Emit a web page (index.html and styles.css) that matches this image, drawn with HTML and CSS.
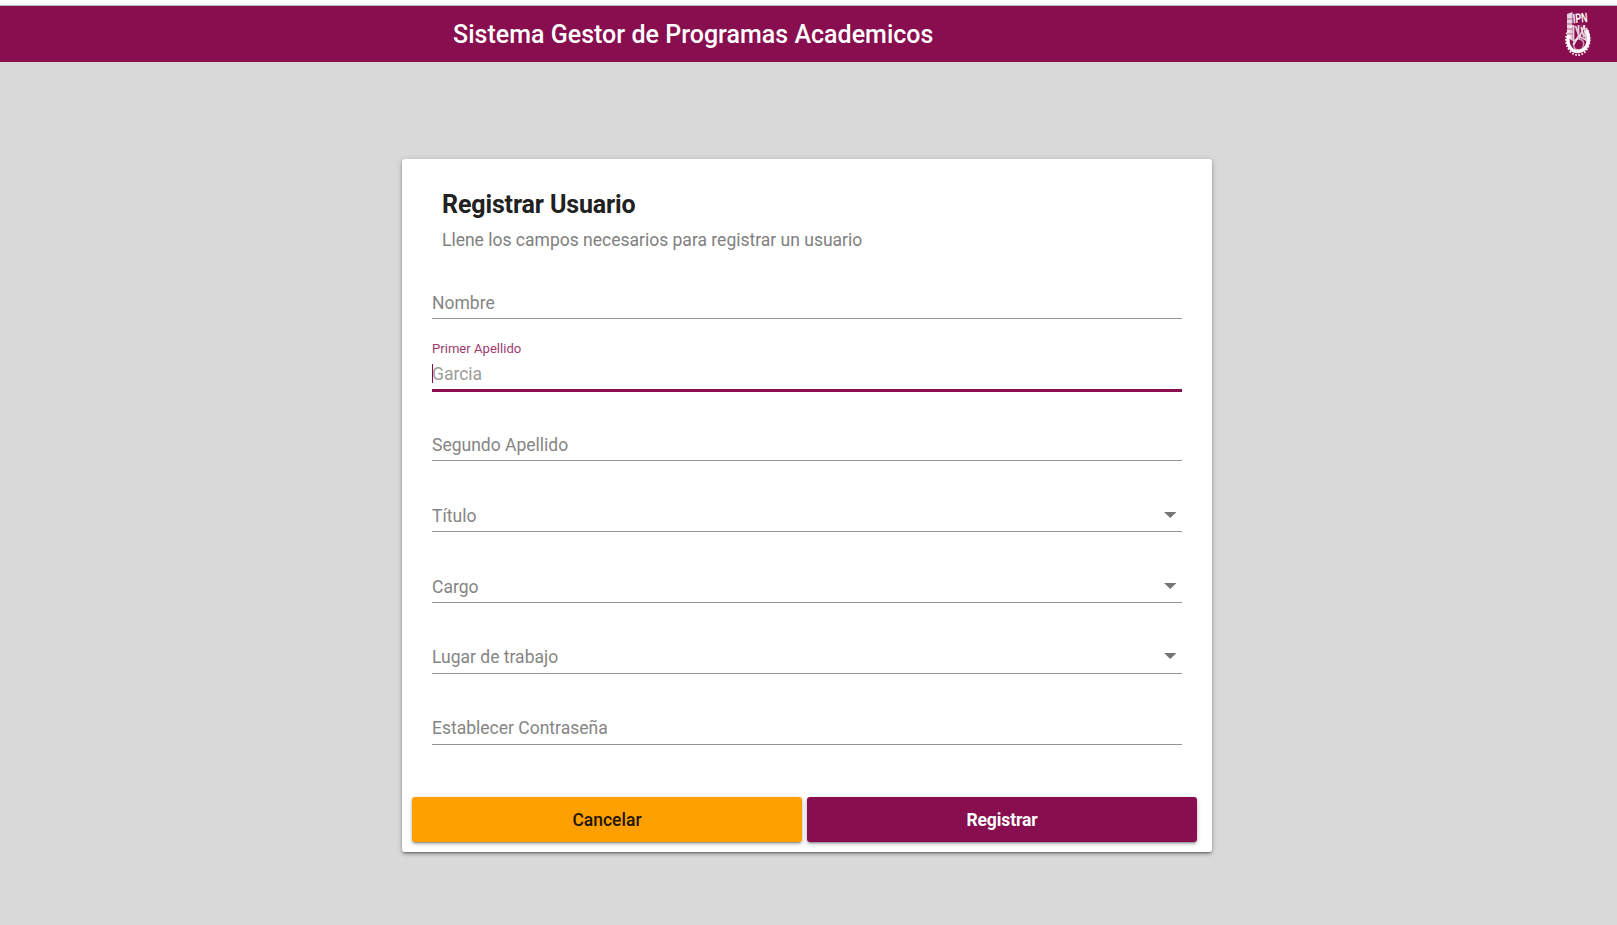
FILE: index.html
```html
<!DOCTYPE html>
<html lang="es">
<head>
<meta charset="utf-8">
<title>Sistema Gestor de Programas Academicos</title>
<link rel="stylesheet" href="styles.css">
</head>
<body>
<header class="toolbar">
  <h1 class="toolbar-title">Sistema Gestor de Programas Academicos</h1>
  <svg class="logo" viewBox="0 0 26 46" width="26" height="46">
    <ellipse cx="12.8" cy="28.5" rx="11.8" ry="15.5" fill="none" stroke="#fff" stroke-width="2" stroke-dasharray="1.7 1.5" opacity=".9"/>
    <path d="M21.500 19c4.500 11 .5 21-8.500 21.500C5 41 1 32 4 23" fill="none" stroke="#fff" stroke-width="3.400"/>
    <path d="M2 3 7.500 1V30L2 26z" fill="#fff" opacity=".82"/>
    <path d="M2 8h6M2 13h6M2 18h6M2 23h6" stroke="#880e4f" stroke-width=".6"/>
    <path d="M7.500 12.500 25 11v3L7.500 15z" fill="#880e4f"/>
    <text class="logo-text" transform="translate(8.200 12.300) rotate(-5) scale(.88 1.350)">IPN</text>
    <path d="M8.500 14v16M10.500 15l4 11 5-12M19 14l2 15-7.500-4-5 9M13.500 14v10M16 16l3 10" fill="none" stroke="#fff" stroke-width="1.800" opacity=".8"/>
    <path d="M8.500 31c2-4 8-4 10 0 1 5-2 8-5 8s-6-3-5-8z" fill="none" stroke="#fff" stroke-width="1.500" opacity=".6"/>
  </svg>
</header>
<main class="page">
  <form class="card">
    <div class="card-header">
      <h2 class="card-title">Registrar Usuario</h2>
      <p class="card-subtitle">Llene los campos necesarios para registrar un usuario</p>
    </div>
    <div class="fields">
      <div class="field"><span class="label">Nombre</span></div>
      <div class="field focused">
        <span class="float-label">Primer Apellido</span>
        <span class="value"><i class="caret"></i>Garcia</span>
      </div>
      <div class="field"><span class="label">Segundo Apellido</span></div>
      <div class="field"><span class="label">Título</span><i class="arrow"></i></div>
      <div class="field"><span class="label">Cargo</span><i class="arrow"></i></div>
      <div class="field raised"><span class="label">Lugar de trabajo</span><i class="arrow"></i></div>
      <div class="field raised"><span class="label">Establecer Contraseña</span></div>
    </div>
    <div class="actions">
      <button type="button" class="btn cancel">Cancelar</button>
      <button type="button" class="btn submit">Registrar</button>
    </div>
  </form>
</main>
</body>
</html>
```
FILE: styles.css
```css
* { box-sizing: border-box; }
html, body { height: 100%; }
body {
  margin: 0;
  display: flex;
  flex-direction: column;
  border-top: 5px solid #fff;
  background: #d9d9d9;
  font-family: Roboto, "Liberation Sans", sans-serif;
  overflow: hidden;
}
.toolbar {
  flex: none;
  height: 57px;
  border-top: 1px solid #b9b9b9;
  background: #880e4f;
  display: flex;
  align-items: center;
  justify-content: space-between;
  padding: 0 26px 0 453px;
}
.toolbar-title {
  margin: 2px 0 0;
  color: #fff;
  font-size: 25px;
  line-height: 30px;
  font-weight: 500;
  letter-spacing: .02px;
}
.logo { display: block; margin-top: -1px; overflow: visible; }
.logo-text { font: 700 10px "Liberation Sans", sans-serif; fill: #fff; }
.page { flex: 1; padding-top: 97px; }
.card {
  width: 810px;
  height: 693px;
  margin-left: 402px;
  background: #fff;
  border-radius: 3px;
  box-shadow: 0 3px 1px -2px rgba(0,0,0,.2), 0 2px 3px rgba(0,0,0,.28), 0 1px 6px rgba(0,0,0,.16);
  display: flex;
  flex-direction: column;
}
.card-header { height: 89px; padding: 30px 40px 0; color: #212121; }
.card-title { margin: 0; font-size: 25px; line-height: 32px; font-weight: 700; letter-spacing: -.13px; }
.card-subtitle { margin: 7px 0 0; font-size: 17.5px; line-height: 24px; color: #808080; }
.fields { padding: 0 30px; }
.field {
  height: 71px;
  border-bottom: 1px solid #949494;
  display: flex;
  align-items: flex-end;
  justify-content: space-between;
  padding-bottom: 5px;
  font-size: 17.5px;
  line-height: 20px;
  color: #858585;
}
.field.raised { padding-bottom: 6px; }
.field.focused {
  flex-direction: column;
  align-items: flex-start;
  justify-content: flex-end;
  border-color: #880e4f;
  box-shadow: 0 2px #880e4f;
}
.float-label { font-size: 13.1px; line-height: 16px; color: #9c3b70; margin-bottom: 7px; }
.value { position: relative; color: #9c9c9c; }
.caret { position: absolute; left: 0; top: 0; width: 1px; height: 19px; background: #880e4f; }
.arrow {
  width: 13px;
  height: 6px;
  margin: 0 5px 8px 0;
  background: #757575;
  clip-path: polygon(0 0, 12.5px 0, 6.25px 100%);
}
.actions { margin-top: 52px; padding: 0 15px 0 10px; display: flex; gap: 5px; }
.btn {
  flex: 1;
  height: 45px;
  border: 0;
  border-radius: 3px;
  padding: 0;
  font: 500 17.5px Roboto, sans-serif;
  box-shadow: 0 3px 1px -2px rgba(0,0,0,.2), 0 2px 3px rgba(0,0,0,.24), 0 1px 6px rgba(0,0,0,.12);
}
.cancel { background: #ffa000; color: #211500; }
.submit { background: #880e4f; color: #fff; font-weight: 700; letter-spacing: -.1px; }
```
